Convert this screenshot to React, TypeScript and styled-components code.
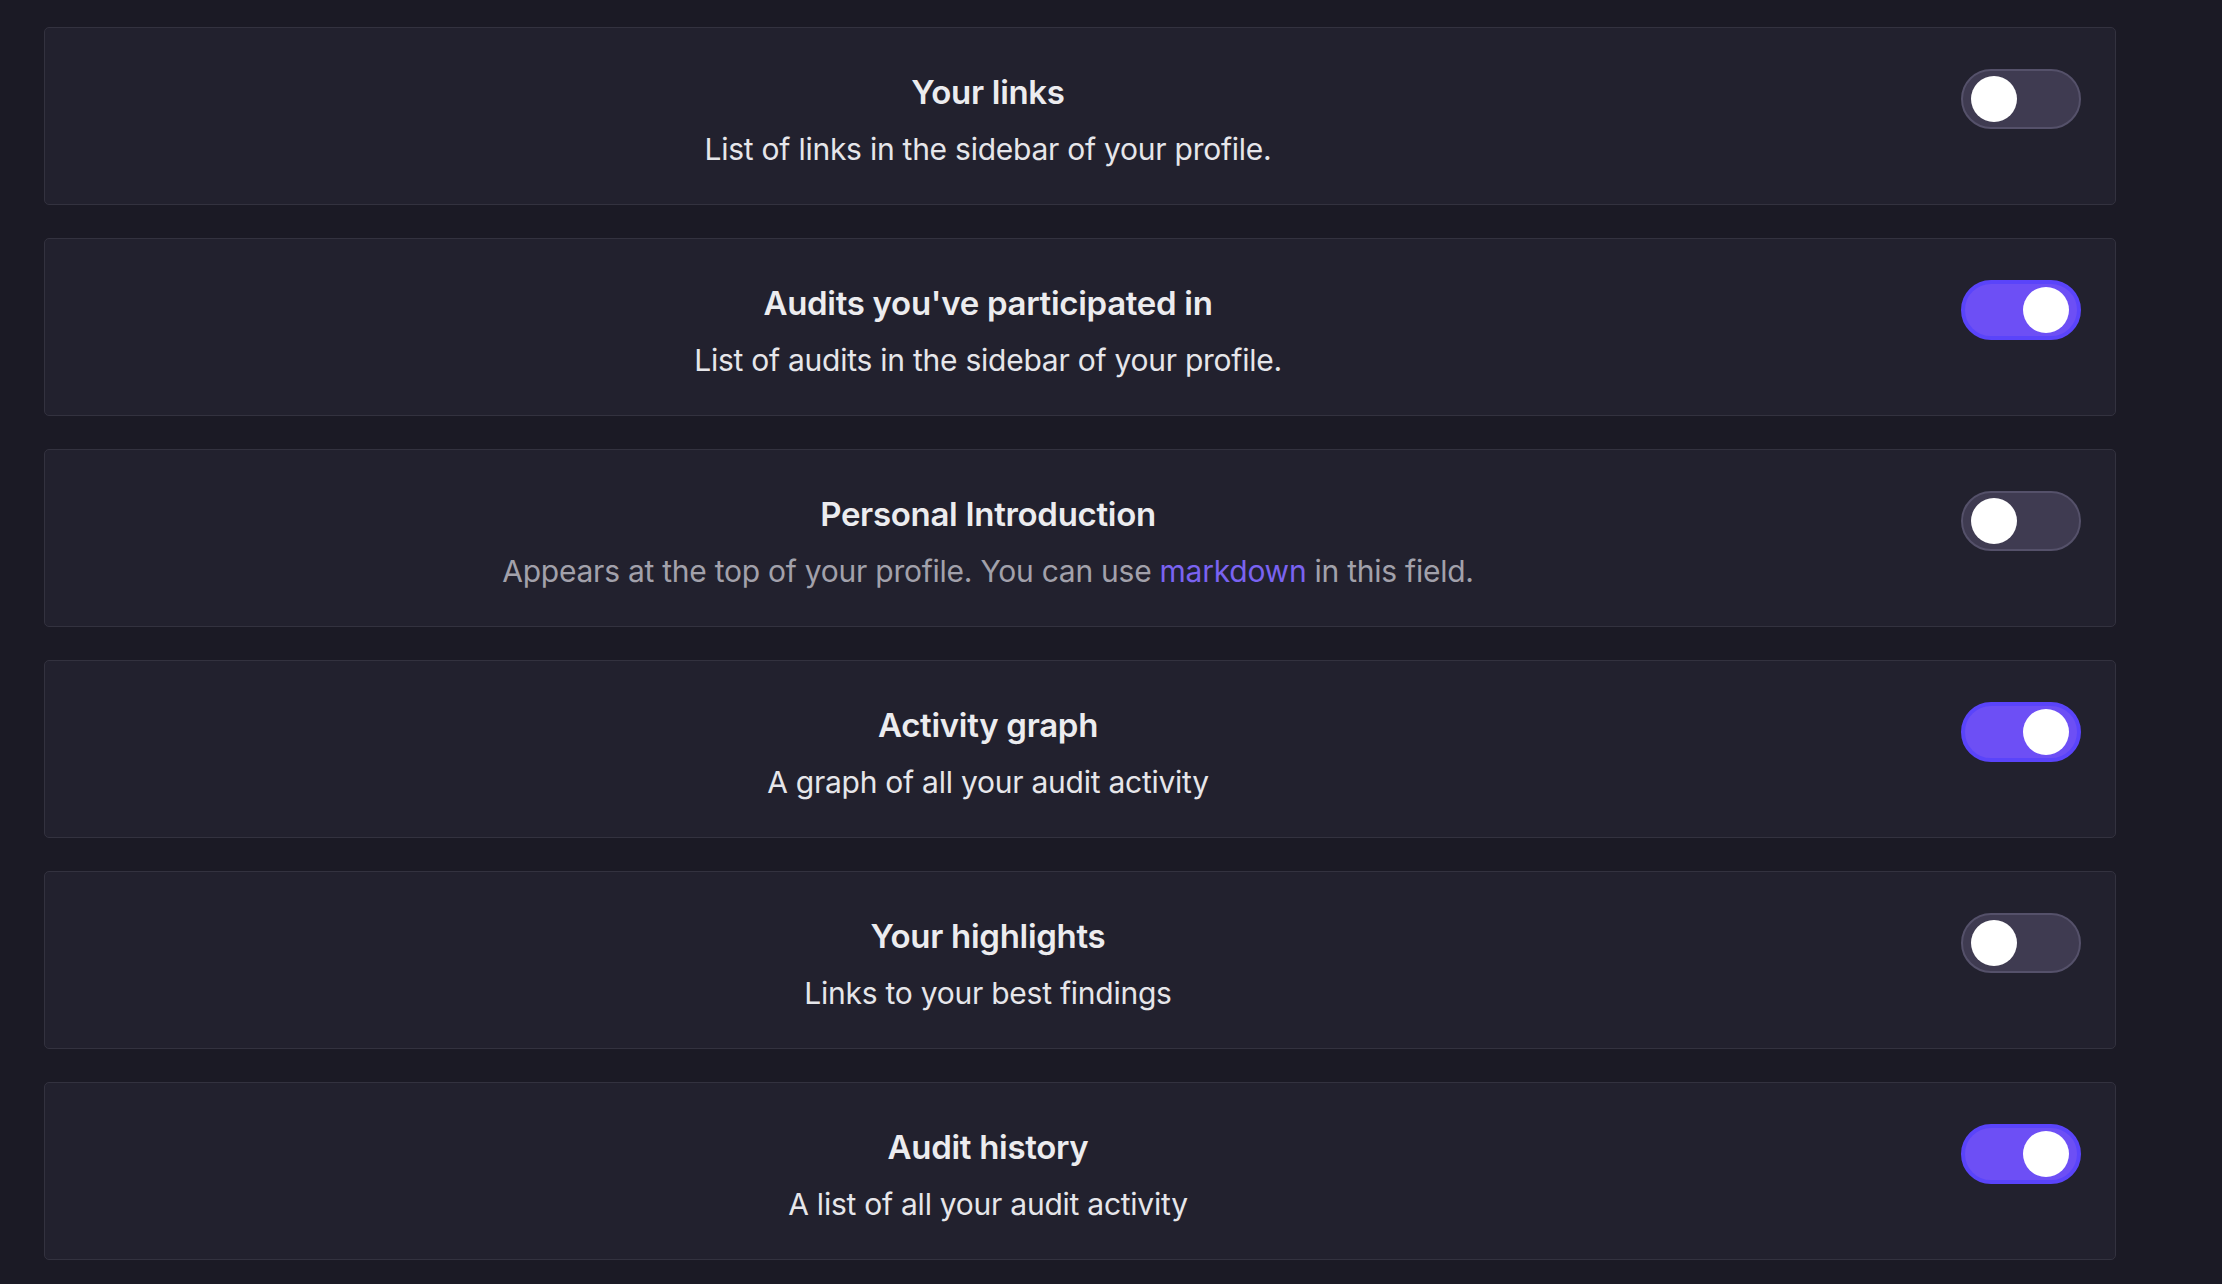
import React from "react";
import styled, { createGlobalStyle } from "styled-components";

const GlobalStyle = createGlobalStyle`
  html, body {
    margin: 0;
    padding: 0;
    background: #1b1a25;
  }
  body {
    font-family: "Inter", "Noto Sans", sans-serif;
    -webkit-font-smoothing: antialiased;
  }
`;

const Page = styled.div`
  min-height: 100vh;
  box-sizing: border-box;
  padding: 27px 106px 0 44px;
  background: #1b1a25;
`;

const List = styled.div`
  display: flex;
  flex-direction: column;
  gap: 33px;
`;

const Card = styled.section`
  box-sizing: border-box;
  height: 178px;
  display: flex;
  align-items: flex-start;
  padding: 41px 34px 0 34px;
  background: #22212e;
  border: 1px solid #33323f;
  border-radius: 5px;
`;

const TextBlock = styled.div`
  flex: 1;
  display: flex;
  flex-direction: column;
  align-items: center;
  text-align: center;
  padding-top: 3px;
`;

const Title = styled.h3`
  margin: 0;
  font-size: 33px;
  line-height: 40px;
  font-weight: 600;
  color: #ececef;
  letter-spacing: -0.3px;
`;

const Description = styled.p<{ $muted?: boolean }>`
  margin: 17px 0 0;
  font-size: 30px;
  line-height: 40px;
  font-weight: 400;
  letter-spacing: -0.25px;
  color: ${(p) => (p.$muted ? "#a2a1ab" : "#e6e6ea")};
`;

const Link = styled.a`
  color: #7a63f1;
  text-decoration: none;
`;

const Track = styled.button<{ $on: boolean }>`
  position: relative;
  flex: none;
  box-sizing: border-box;
  width: 120px;
  height: 60px;
  margin-left: 64px;
  padding: 0;
  border-radius: 30px;
  cursor: pointer;
  border: ${(p) => (p.$on ? "4px solid #5a44fa" : "2px solid #55516a")};
  background: ${(p) => (p.$on ? "#6d4ff5" : "#3f3b51")};
`;

const Knob = styled.span<{ $on: boolean }>`
  position: absolute;
  top: ${(p) => (p.$on ? "3px" : "5px")};
  left: ${(p) => (p.$on ? "58px" : "8px")};
  width: 46px;
  height: 46px;
  border-radius: 50%;
  background: #ffffff;
`;

type Item = {
  title: string;
  desc: React.ReactNode;
  muted?: boolean;
  on: boolean;
};

const items: Item[] = [
  { title: "Your links", desc: "List of links in the sidebar of your profile.", on: false },
  { title: "Audits you've participated in", desc: "List of audits in the sidebar of your profile.", on: true },
  {
    title: "Personal Introduction",
    desc: (
      <>
        Appears at the top of your profile. You can use <Link href="#">markdown</Link> in this field.
      </>
    ),
    muted: true,
    on: false,
  },
  { title: "Activity graph", desc: "A graph of all your audit activity", on: true },
  { title: "Your highlights", desc: "Links to your best findings", on: false },
  { title: "Audit history", desc: "A list of all your audit activity", on: true },
];

export default function App() {
  return (
    <>
      <GlobalStyle />
      <Page>
        <List>
          {items.map((it) => (
            <Card key={it.title}>
              <TextBlock>
                <Title>{it.title}</Title>
                <Description $muted={it.muted}>{it.desc}</Description>
              </TextBlock>
              <Track $on={it.on} aria-pressed={it.on}>
                <Knob $on={it.on} />
              </Track>
            </Card>
          ))}
        </List>
      </Page>
    </>
  );
}
